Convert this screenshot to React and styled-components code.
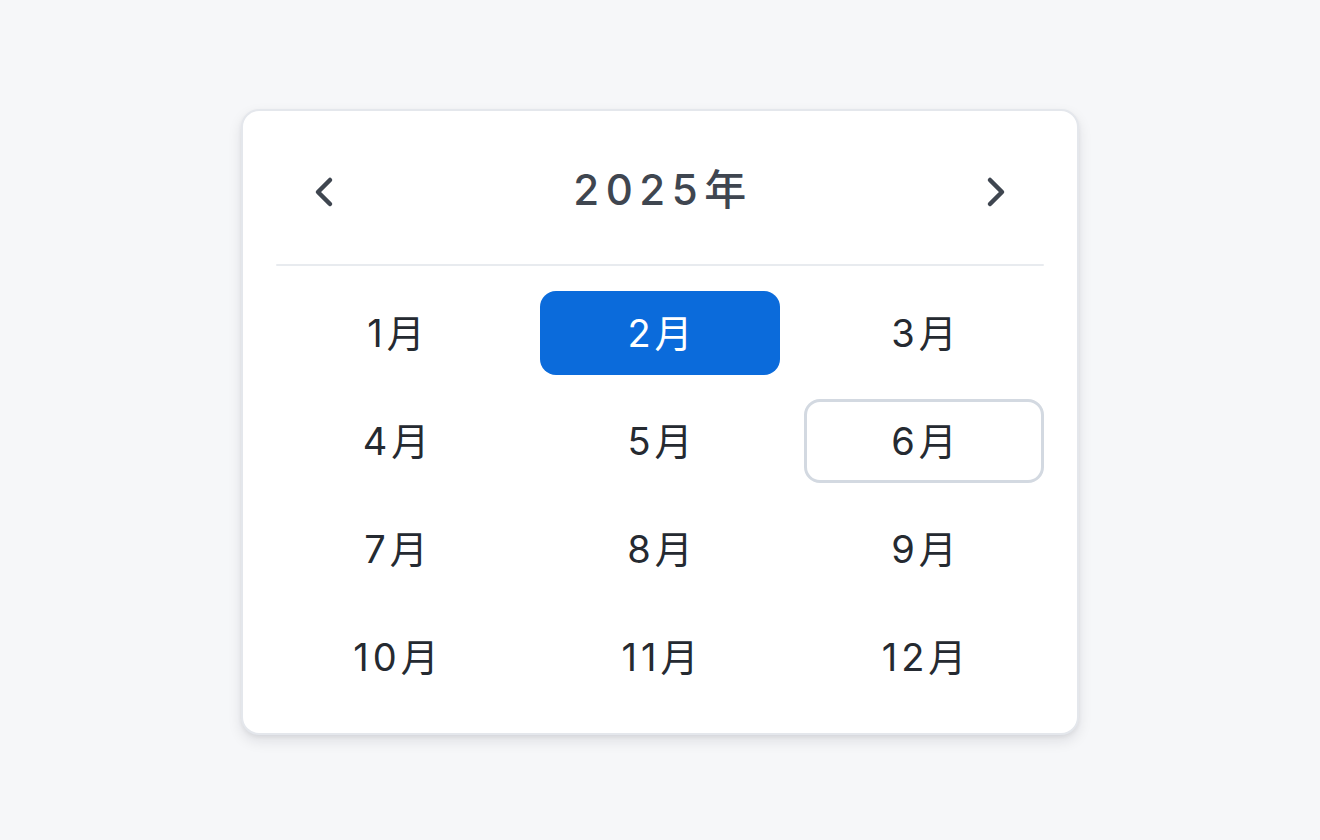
import React, { useState } from "react";
import styled, { createGlobalStyle } from "styled-components";

const GlobalStyle = createGlobalStyle`
  html, body {
    margin: 0;
    padding: 0;
    background: #f6f7f9;
  }
  body {
    font-family: Inter, "Noto Sans CJK JP", sans-serif;
  }
`;

const Page = styled.div`
  min-height: 840px;
  display: flex;
  justify-content: center;
  padding-top: 109px;
  box-sizing: border-box;
`;

const Card = styled.div`
  width: 838px;
  height: 626px;
  box-sizing: border-box;
  background: #ffffff;
  border: 2px solid #e4e7ec;
  border-radius: 18px;
  box-shadow: 0 6px 14px rgba(17, 24, 39, 0.1), 0 2px 4px rgba(17, 24, 39, 0.06);
  padding: 33px 33px 0 33px;
  display: flex;
  flex-direction: column;
`;

const Header = styled.div`
  height: 96px;
  display: flex;
  align-items: center;
  justify-content: space-between;
  padding: 0 32px;
`;

const NavButton = styled.button`
  width: 32px;
  height: 32px;
  border: none;
  background: transparent;
  padding: 0;
  display: flex;
  align-items: center;
  justify-content: center;
  color: #3f4650;
  cursor: pointer;
`;

const Title = styled.div`
  font-family: Inter, "Noto Sans CJK JP", sans-serif;
  font-size: 42px;
  font-weight: 500;
  letter-spacing: 6.5px;
  color: #3f4650;
  line-height: 1;
  padding: 0 0 4px 6px;
`;

const Divider = styled.hr`
  margin: 24px 0 25px;
  border: none;
  height: 2px;
  border-radius: 1px;
  background: #e8ebef;
`;

const Grid = styled.div`
  display: grid;
  grid-template-columns: repeat(3, 240px);
  grid-auto-rows: 84px;
  column-gap: 24px;
  row-gap: 24px;
`;

const Month = styled.button`
  box-sizing: border-box;
  border-radius: 16px;
  border: 3px solid ${(p) => (p.$current ? "#d3d9e1" : "transparent")};
  background: ${(p) => (p.$selected ? "#0b6bdb" : "transparent")};
  color: ${(p) => (p.$selected ? "#ffffff" : "#252a31")};
  font-family: Inter, "Noto Sans CJK JP", sans-serif;
  font-size: 38px;
  letter-spacing: 4px;
  padding: 0 0 6px 4px;
  display: flex;
  align-items: center;
  justify-content: center;
  cursor: pointer;
`;

const Chevron = ({ dir }) => (
  <svg width="20" height="32" viewBox="0 0 20 32" fill="none">
    <path
      d={dir === "left" ? "M16 4 L4 16 L16 28" : "M4 4 L16 16 L4 28"}
      stroke="currentColor"
      strokeWidth="4.5"
      strokeLinecap="round"
      strokeLinejoin="round"
    />
  </svg>
);

export default function App() {
  const [year, setYear] = useState(2025);
  const [selected, setSelected] = useState(2);
  const months = Array.from({ length: 12 }, (_, i) => i + 1);

  return (
    <>
      <GlobalStyle />
      <Page>
        <Card>
          <Header>
            <NavButton onClick={() => setYear(year - 1)} aria-label="前年">
              <Chevron dir="left" />
            </NavButton>
            <Title>{year}年</Title>
            <NavButton onClick={() => setYear(year + 1)} aria-label="翌年">
              <Chevron dir="right" />
            </NavButton>
          </Header>
          <Divider />
          <Grid>
            {months.map((m) => (
              <Month
                key={m}
                $selected={m === selected}
                $current={m === 6}
                onClick={() => setSelected(m)}
              >
                {m}月
              </Month>
            ))}
          </Grid>
        </Card>
      </Page>
    </>
  );
}
